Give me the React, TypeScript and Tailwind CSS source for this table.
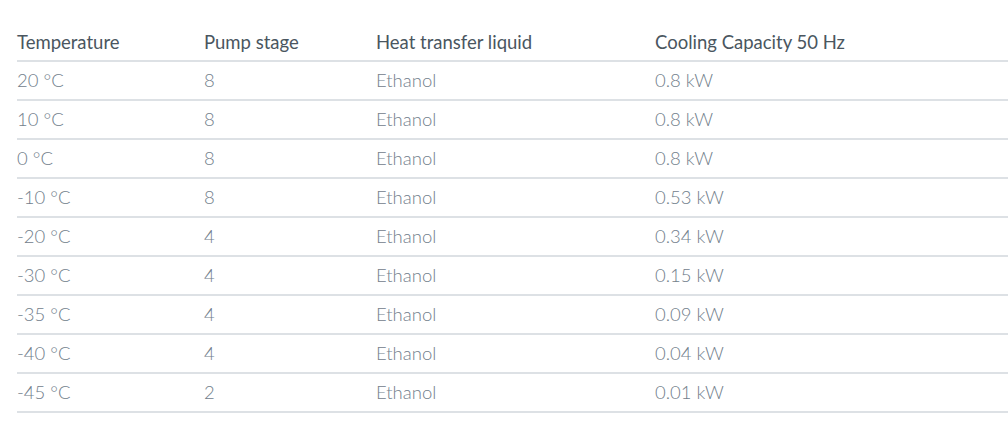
import React from "react";

const rows = [
  ["20 °C", "8", "Ethanol", "0.8 kW"],
  ["10 °C", "8", "Ethanol", "0.8 kW"],
  ["0 °C", "8", "Ethanol", "0.8 kW"],
  ["-10 °C", "8", "Ethanol", "0.53 kW"],
  ["-20 °C", "4", "Ethanol", "0.34 kW"],
  ["-30 °C", "4", "Ethanol", "0.15 kW"],
  ["-35 °C", "4", "Ethanol", "0.09 kW"],
  ["-40 °C", "4", "Ethanol", "0.04 kW"],
  ["-45 °C", "2", "Ethanol", "0.01 kW"],
];

export default function App() {
  return (
    <div className="bg-white w-[1008px] h-[424px] overflow-hidden pl-[17px] pt-[25px] font-['Lato',sans-serif]">
      <div className="flex h-[37px] items-center border-b-2 border-[#dde1e5] text-[18.5px] text-[#4a5660]">
        <div className="w-[187px]">Temperature</div>
        <div className="w-[172px]">Pump stage</div>
        <div className="w-[279px]">Heat transfer liquid</div>
        <div>Cooling Capacity 50 Hz</div>
      </div>
      {rows.map((r, i) => (
        <div
          key={i}
          className="flex h-[39px] items-center border-b-2 border-[#dde1e5] text-[18.5px] font-light text-[#72808c]"
        >
          <div className="w-[187px]">{r[0]}</div>
          <div className="w-[172px]">{r[1]}</div>
          <div className="w-[279px]">{r[2]}</div>
          <div>{r[3]}</div>
        </div>
      ))}
    </div>
  );
}
